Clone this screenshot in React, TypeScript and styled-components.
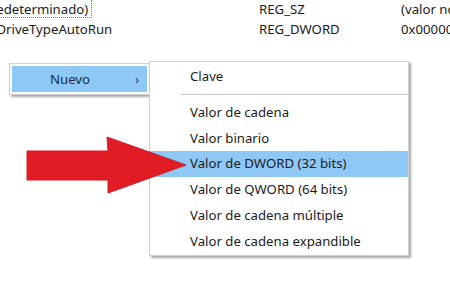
import React from "react";
import styled, { createGlobalStyle } from "styled-components";

const Global = createGlobalStyle`
  html, body { margin: 0; padding: 0; background: #fff; }
  body { font-family: "Noto Sans", "Open Sans", sans-serif; }
`;

const Page = styled.div`
  position: relative;
  width: 450px;
  height: 296px;
  overflow: hidden;
  background: #fff;
  color: #1b1b1b;
  font-size: 13.2px;
  -webkit-font-smoothing: antialiased;
`;

const List = styled.div`
  display: grid;
  grid-template-columns: 280px 142px 1fr;
  row-gap: 2px;
  margin-left: -21px;
`;

const Cell = styled.div`
  height: 18px;
  line-height: 18px;
  white-space: nowrap;
  overflow: hidden;
`;

const NameCell = styled(Cell)<{ $focus?: boolean }>`
  & > span {
    display: inline-block;
    box-sizing: border-box;
    padding-right: 3px;
    padding-left: ${(p) => (p.$focus ? "0" : "14px")};
    border-right: ${(p) => (p.$focus ? "1px dotted #777" : "none")};
    border-bottom: ${(p) => (p.$focus ? "1px dotted #777" : "none")};
    height: 18px;
  }
`;

const Menu = styled.div<{ $x: number; $y: number; $w: number }>`
  position: absolute;
  left: ${(p) => p.$x}px;
  top: ${(p) => p.$y}px;
  width: ${(p) => p.$w}px;
  background: #fff;
  border: 1px solid #cfcfcf;
  box-shadow: 2px 2px 2px rgba(0, 0, 0, 0.35);
  box-sizing: border-box;
`;

const ParentMenu = styled(Menu)`
  padding: 2px;
`;

const ParentItem = styled.div`
  display: flex;
  align-items: center;
  height: 26px;
  background: #8ec8f6;
  color: #1c2a40;
  padding-left: 38px;
  padding-right: 8px;
`;

const ParentLabel = styled.span`
  flex: 1;
`;

const Chevron = styled.span`
  font-size: 12px;
`;

const SubMenu = styled(Menu)`
  padding: 2px 0 0 0;
`;

const Item = styled.div<{ $active?: boolean }>`
  height: 25.8px;
  line-height: 25.8px;
  padding-left: 40px;
  background: ${(p) => (p.$active ? "#8ec8f6" : "transparent")};
  color: #1b1b1b;
  white-space: nowrap;
`;

const Separator = styled.div`
  height: 1px;
  background: #c8c8c8;
  margin: 4px 0 5px 31px;
`;

const ArrowSvg = styled.svg`
  position: absolute;
  left: 0;
  top: 0;
  pointer-events: none;
`;

export default function App() {
  return (
    <Page>
      <Global />
      <List>
        <NameCell $focus>
          <span>(predeterminado)</span>
        </NameCell>
        <Cell>REG_SZ</Cell>
        <Cell>(valor no establecido)</Cell>
        <NameCell>
          <span>&nbsp;DriveTypeAutoRun</span>
        </NameCell>
        <Cell>REG_DWORD</Cell>
        <Cell>0x000000ff (255)</Cell>
      </List>

      <ParentMenu $x={9} $y={63} $w={141}>
        <ParentItem>
          <ParentLabel>Nuevo</ParentLabel>
          <Chevron>›</Chevron>
        </ParentItem>
      </ParentMenu>

      <SubMenu $x={149} $y={61} $w={260}>
        <Item>Clave</Item>
        <Separator />
        <Item>Valor de cadena</Item>
        <Item>Valor binario</Item>
        <Item $active>Valor de DWORD (32 bits)</Item>
        <Item>Valor de QWORD (64 bits)</Item>
        <Item>Valor de cadena múltiple</Item>
        <Item>Valor de cadena expandible</Item>
      </SubMenu>

      <ArrowSvg width="450" height="296" viewBox="0 0 450 296">
        <path
          d="M27 151 L108 151 L107 137 L186 165 L108 193 L108 180 L27 180 Z"
          fill="#e21c24"
          stroke="#d41a22"
          strokeWidth="1"
          strokeLinejoin="round"
        />
      </ArrowSvg>
    </Page>
  );
}
